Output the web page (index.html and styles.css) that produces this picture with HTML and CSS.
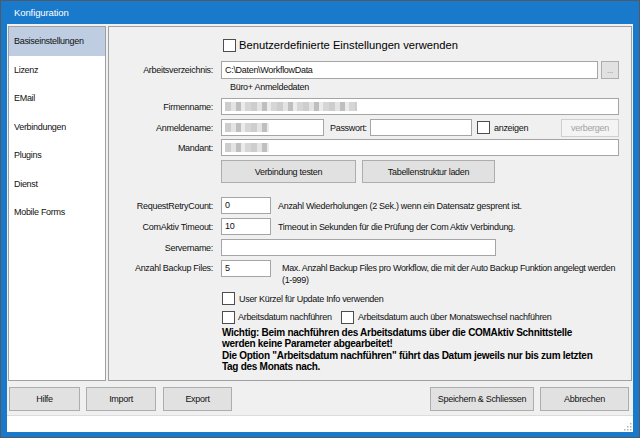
FILE: index.html
```html
<!DOCTYPE html>
<html lang="de">
<head>
    <meta charset="UTF-8">
    <title>Konfiguration</title>
    <link rel="stylesheet" href="styles.css">
</head>
<body>
    <div class="window">
        <div class="titlebar">Konfiguration</div>
        <div class="client">
            <div class="main">
                <ul class="nav">
                    <li class="active">Basiseinstellungen</li>
                    <li>Lizenz</li>
                    <li>EMail</li>
                    <li>Verbindungen</li>
                    <li>Plugins</li>
                    <li>Dienst</li>
                    <li>Mobile Forms</li>
                </ul>

                <div class="panel">
                    <div class="hdr">
                        <span class="check"></span>
                        <span class="hdr-text">Benutzerdefinierte Einstellungen verwenden</span>
                    </div>

                    <div class="row r-dir">
                        <span class="lbl">Arbeitsverzeichnis:</span>
                        <div class="input grow">C:\Daten\WorkflowData</div>
                        <button class="btn dots">...</button>
                    </div>

                    <div class="sub">Büro+ Anmeldedaten</div>

                    <div class="row r-firm">
                        <span class="lbl">Firmenname:</span>
                        <div class="input grow"><span class="blur blur-long"></span></div>
                    </div>

                    <div class="row r-user">
                        <span class="lbl">Anmeldename:</span>
                        <div class="input w-user"><span class="blur blur-short"></span></div>
                        <span class="pw-lbl">Passwort:</span>
                        <div class="input w-pw"></div>
                        <span class="check check-show"></span>
                        <span class="check-text">anzeigen</span>
                        <button class="btn disabled">verbergen</button>
                    </div>

                    <div class="row r-mandant">
                        <span class="lbl">Mandant:</span>
                        <div class="input grow"><span class="blur blur-short"></span></div>
                    </div>

                    <div class="row r-buttons">
                        <span class="lbl"></span>
                        <button class="btn b-test">Verbindung testen</button>
                        <button class="btn b-table">Tabellenstruktur laden</button>
                    </div>

                    <div class="row r-retry">
                        <span class="lbl">RequestRetryCount:</span>
                        <div class="input w-num">0</div>
                        <span class="hint">Anzahl Wiederholungen (2 Sek.) wenn ein Datensatz gesprent ist.</span>
                    </div>

                    <div class="row r-next">
                        <span class="lbl">ComAktiv Timeout:</span>
                        <div class="input w-num">10</div>
                        <span class="hint">Timeout in Sekunden für die Prüfung der Com Aktiv Verbindung.</span>
                    </div>

                    <div class="row r-next">
                        <span class="lbl">Servername:</span>
                        <div class="input w-server"></div>
                    </div>

                    <div class="row r-next r-backup">
                        <span class="lbl">Anzahl Backup Files:</span>
                        <div class="input w-num">5</div>
                        <span class="hint hint-wrap">Max. Anzahl Backup Files pro Workflow, die mit der Auto Backup Funktion angelegt werden<br>(1-999)</span>
                    </div>

                    <div class="opt r-kuerzel">
                        <span class="check"></span>
                        <span class="check-text">User Kürzel für Update Info verwenden</span>
                    </div>

                    <div class="opt r-datum">
                        <span class="check"></span>
                        <span class="check-text datum-text">Arbeitsdatum nachführen</span>
                        <span class="check"></span>
                        <span class="check-text">Arbeitsdatum auch über Monatswechsel nachführen</span>
                    </div>

                    <p class="note">
                        Wichtig: Beim nachführen des Arbeitsdatums über die COMAktiv Schnittstelle<br>
                        werden keine Parameter abgearbeitet!<br>
                        Die Option "Arbeitsdatum nachführen" führt das Datum jeweils nur bis zum letzten<br>
                        Tag des Monats nach.
                    </p>
                </div>
            </div>

            <div class="footer">
                <button class="btn f-help">Hilfe</button>
                <button class="btn f-import">Import</button>
                <button class="btn f-export">Export</button>
                <button class="btn f-save">Speichern &amp; Schliessen</button>
                <button class="btn f-cancel">Abbrechen</button>
            </div>

            <div class="statusbar">
                <svg class="grip" width="10" height="10" viewBox="0 0 10 10">
                    <rect x="8" y="2" width="1.5" height="1.5" fill="#b5b5b5"/>
                    <rect x="5" y="5" width="1.5" height="1.5" fill="#b5b5b5"/>
                    <rect x="8" y="5" width="1.5" height="1.5" fill="#b5b5b5"/>
                    <rect x="2" y="8" width="1.5" height="1.5" fill="#b5b5b5"/>
                    <rect x="5" y="8" width="1.5" height="1.5" fill="#b5b5b5"/>
                    <rect x="8" y="8" width="1.5" height="1.5" fill="#b5b5b5"/>
                </svg>
            </div>
        </div>
    </div>
</body>
</html>
```

FILE: styles.css
```css
* {
    box-sizing: border-box;
}

body {
    margin: 0;
    font-family: 'Liberation Sans', Arial, sans-serif;
    font-size: 9px;
    letter-spacing: -0.3px;
    color: #111;
    background: #fff;
}

.window {
    width: 640px;
    height: 438px;
    display: flex;
    flex-direction: column;
    padding: 0 6px 5px 6px;
    background: #1979ca;
    border: 1px solid #4f5a66;
}

.titlebar {
    height: 23px;
    line-height: 23px;
    padding-left: 7px;
    color: #fff;
    font-size: 9.5px;
    letter-spacing: -0.1px;
}

.client {
    flex: 1;
    display: flex;
    flex-direction: column;
    background: #f0f0f0;
}

.main {
    height: 357px;
    display: flex;
    padding: 2px 1px 0 1px;
}

/* left navigation list */
.nav {
    width: 98px;
    margin: 0 2px 0 0;
    padding: 0;
    list-style: none;
    background: #fff;
    border: 1px solid #a0a0a0;
}

.nav li {
    height: 28.5px;
    line-height: 28.5px;
    padding-left: 5px;
}

.nav li.active {
    background: #bfcde3;
}

/* right settings panel */
.panel {
    flex: 1;
    display: flex;
    flex-direction: column;
    padding: 10px 12px 0 0;
    border: 1px solid #a0a0a0;
}

.hdr {
    height: 16px;
    display: flex;
    align-items: center;
    padding-left: 114px;
}

.hdr-text {
    margin-left: 3px;
    font-size: 11.2px;
    letter-spacing: 0;
    color: #000;
}

.check {
    width: 13px;
    height: 13px;
    flex: none;
    background: #fff;
    border: 1px solid #4d4d4d;
}

.check-text {
    margin-left: 4px;
}

.row {
    height: 17px;
    display: flex;
    align-items: center;
    margin-top: 4px;
}

.lbl {
    width: 104px;
    margin-right: 8px;
    flex: none;
    text-align: right;
}

.input {
    height: 17px;
    padding: 0 3px;
    line-height: 15px;
    background: #fff;
    border: 1px solid #a5a5a5;
    display: flex;
    align-items: center;
}

.grow {
    flex: 1;
}

.w-user {
    width: 103px;
}

.w-pw {
    width: 102px;
}

.w-num {
    width: 50px;
    flex: none;
}

.w-server {
    width: 275px;
}

.blur {
    height: 9px;
    display: block;
    background: repeating-linear-gradient(90deg, #cdcdcd 0 6px, #e4e4e4 6px 11px, #bfbfbf 11px 16px, #ebebeb 16px 20px, #d6d6d6 20px 26px);
}

.blur-long {
    width: 132px;
}

.blur-short {
    width: 44px;
}

.r-dir {
    height: 18px;
    margin-top: 8px;
}

.r-dir .input {
    height: 18px;
}

.sub {
    margin-top: 2px;
    padding-left: 121px;
    line-height: 12px;
}

.r-firm {
    margin-top: 5px;
}

.r-mandant {
    margin-top: 3px;
}

.pw-lbl {
    width: 40px;
    margin-left: 6px;
}

.check-show {
    margin-left: 5px;
}

.btn {
    height: 23px;
    padding: 0;
    font-family: inherit;
    font-size: 9px;
    letter-spacing: -0.3px;
    color: #111;
    background: #e1e1e1;
    border: 1px solid #adadad;
}

.dots {
    width: 18px;
    height: 18px;
    margin-left: 3px;
    font-size: 8px;
    color: #888;
}

.disabled {
    width: 58px;
    height: 18px;
    margin-left: auto;
    color: #a3a3a3;
    background: #f4f4f4;
    border-color: #cfcfcf;
}

.r-buttons {
    height: 23px;
}

.b-test {
    width: 135px;
}

.b-table {
    width: 133px;
    margin-left: 6px;
}

.r-retry {
    margin-top: 14px;
}

.hint {
    margin-left: 7px;
    white-space: nowrap;
}

.r-backup {
    height: 26px;
    align-items: flex-start;
}

.r-backup .lbl {
    line-height: 17px;
}

.hint-wrap {
    margin: 2px 0 0 11px;
    line-height: 12px;
    letter-spacing: -0.35px;
}

.opt {
    display: flex;
    align-items: center;
    padding-left: 113px;
}

.r-kuerzel {
    height: 15px;
    margin-top: 5px;
}

.r-datum {
    height: 14px;
    margin-top: 4px;
}

.datum-text {
    width: 103px;
    margin-left: 3px;
}

.note {
    margin: 3px 0 0 0;
    padding-left: 113px;
    line-height: 11.4px;
    font-size: 10px;
    font-weight: bold;
    letter-spacing: -0.28px;
    color: #000;
}

/* bottom buttons */
.footer {
    height: 34px;
    display: flex;
    padding: 6px 4px 0 2px;
}

.footer .btn {
    height: 24px;
}

.f-help {
    width: 71px;
}

.f-import {
    width: 70px;
    margin-left: 6px;
}

.f-export {
    width: 69px;
    margin-left: 7px;
}

.f-save {
    width: 104px;
    margin-left: auto;
}

.f-cancel {
    width: 89px;
    margin-left: 6px;
}

.statusbar {
    flex: 1;
    display: flex;
    justify-content: flex-end;
    align-items: flex-end;
    padding: 0 1px 1px 0;
    background: #fff;
    border-top: 1px solid #dcdcdc;
}
```
